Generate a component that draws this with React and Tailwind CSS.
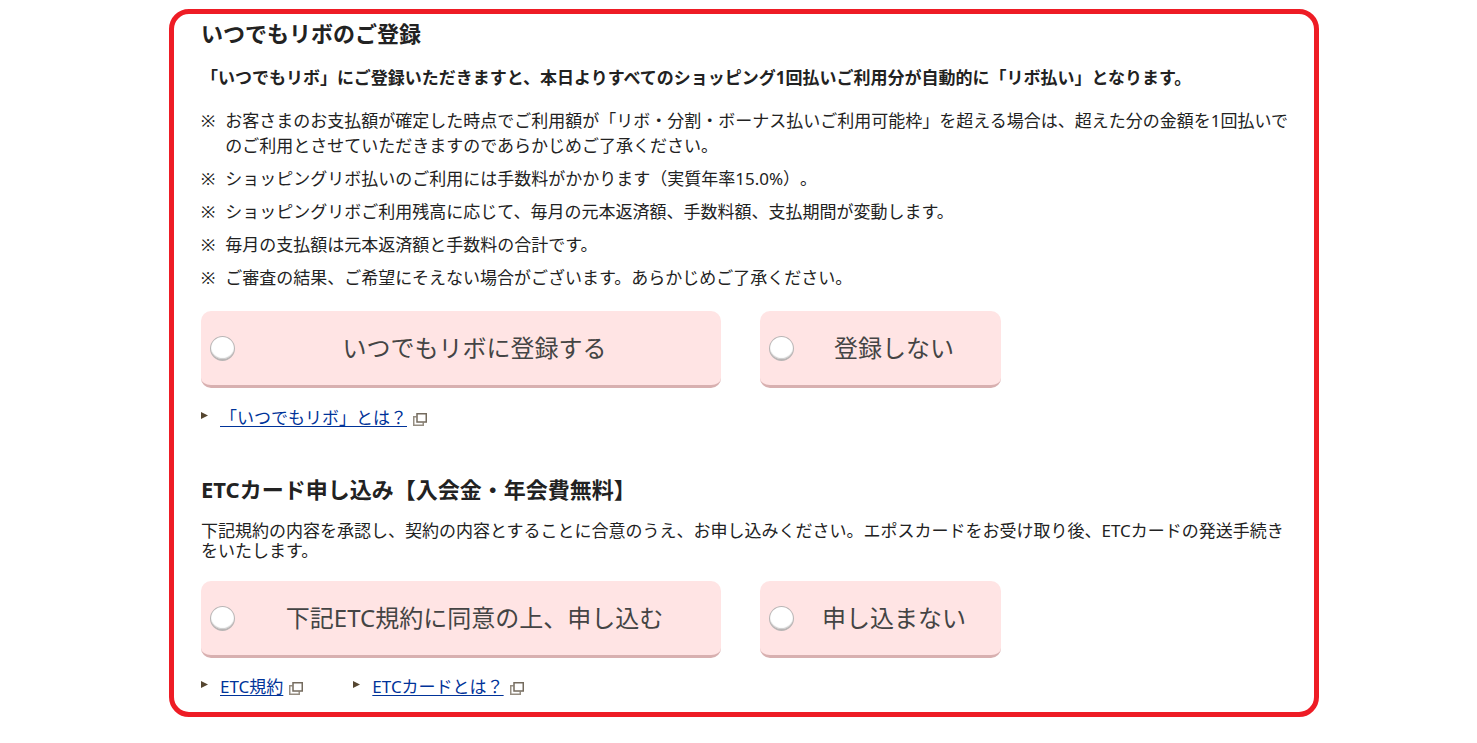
const RIBO_NOTES = [
  'お客さまのお支払額が確定した時点でご利用額が「リボ・分割・ボーナス払いご利用可能枠」を超える場合は、超えた分の金額を1回払いでのご利用とさせていただきますのであらかじめご了承ください。',
  'ショッピングリボ払いのご利用には手数料がかかります（実質年率15.0%）。',
  'ショッピングリボご利用残高に応じて、毎月の元本返済額、手数料額、支払期間が変動します。',
  '毎月の支払額は元本返済額と手数料の合計です。',
  'ご審査の結果、ご希望にそえない場合がございます。あらかじめご了承ください。',
];

function WindowIcon() {
  return (
    <svg className="w-[14px] h-[13px] mt-[3px]" viewBox="0 0 14 13" fill="none" aria-hidden="true">
      <path d="M3.5 3.75H0.75V12.25H10.25V9.5" stroke="#958d81" strokeWidth="1.5" />
      <rect x="4" y="0.75" width="9.25" height="8.25" stroke="#746b5e" strokeWidth="1.5" />
    </svg>
  );
}

function PopupLink({ href, children }) {
  return (
    <span className="inline-flex items-center">
      <svg className="w-[7px] h-[7px] mb-1 mr-3" viewBox="0 0 7 7" aria-hidden="true">
        <path d="M0 0L7 3.5L0 7Z" fill="#554631" />
      </svg>
      <a href={href} className="text-[#003399] underline underline-offset-2 decoration-1 mr-[6px]">{children}</a>
      <WindowIcon />
    </span>
  );
}

function RadioButton({ name, value, wide, children }) {
  return (
    <label
      className={`flex items-center h-[77px] pl-[9px] pr-[7px] rounded-[10px] bg-[#ffe4e4] border-b-3 border-[#d8b0b0] text-2xl text-[#444] cursor-pointer ${
        wide ? 'w-[520px]' : 'w-[241px]'
      }`}
    >
      <input
        type="radio"
        name={name}
        value={value}
        className="appearance-none shrink-0 size-[25px] rounded-full bg-white border border-[#b9b5b5] border-b-2 shadow-[inset_0_-1px_1px_#ccc] checked:bg-[#d8b0b0]"
      />
      <span className="flex-1 text-center">{children}</span>
    </label>
  );
}

export default function App() {
  return (
    <div className="min-h-screen bg-white pl-[11px] pt-[9px] font-['Noto_Sans','Noto_Sans_CJK_JP',sans-serif] text-[17px] leading-[25px] text-[#222] [text-spacing-trim:space-all]">
      <main className="w-full max-w-[1150px] mx-auto border-5 border-[#ee1c25] rounded-[20px] pl-[27px] pr-5 pt-[5px] pb-[13px]">
        <section>
          <h2 className="text-[22px] leading-7 font-bold">いつでもリボのご登録</h2>
          <p className="mt-[18px] font-bold">
            「いつでもリボ」にご登録いただきますと、本日よりすべてのショッピング1回払いご利用分が自動的に「リボ払い」となります。
          </p>

          <ul className="mt-[18px] flex flex-col gap-2">
            {RIBO_NOTES.map((note) => (
              <li key={note} className="flex gap-[10px]">
                <span className="shrink-0">※</span>
                <span>{note}</span>
              </li>
            ))}
          </ul>

          <div className="mt-[21px] flex flex-wrap gap-[39px]">
            <RadioButton name="ribo" value="yes" wide>いつでもリボに登録する</RadioButton>
            <RadioButton name="ribo" value="no">登録しない</RadioButton>
          </div>

          <div className="mt-[17px] flex">
            <PopupLink href="#ribo">「いつでもリボ」とは？</PopupLink>
          </div>
        </section>

        <section className="mt-[45px]">
          <h2 className="text-[22px] leading-7 font-bold">ETCカード申し込み【入会金・年会費無料】</h2>
          <p className="mt-[18px] leading-5">
            下記規約の内容を承認し、契約の内容とすることに合意のうえ、お申し込みください。エポスカードをお受け取り後、ETCカードの発送手続きをいたします。
          </p>

          <div className="mt-5 flex flex-wrap gap-[39px]">
            <RadioButton name="etc" value="yes" wide>下記ETC規約に同意の上、申し込む</RadioButton>
            <RadioButton name="etc" value="no">申し込まない</RadioButton>
          </div>

          <div className="mt-4 flex flex-wrap gap-[50px]">
            <PopupLink href="#etc-terms">ETC規約</PopupLink>
            <PopupLink href="#etc-card">ETCカードとは？</PopupLink>
          </div>
        </section>
      </main>
    </div>
  );
}
